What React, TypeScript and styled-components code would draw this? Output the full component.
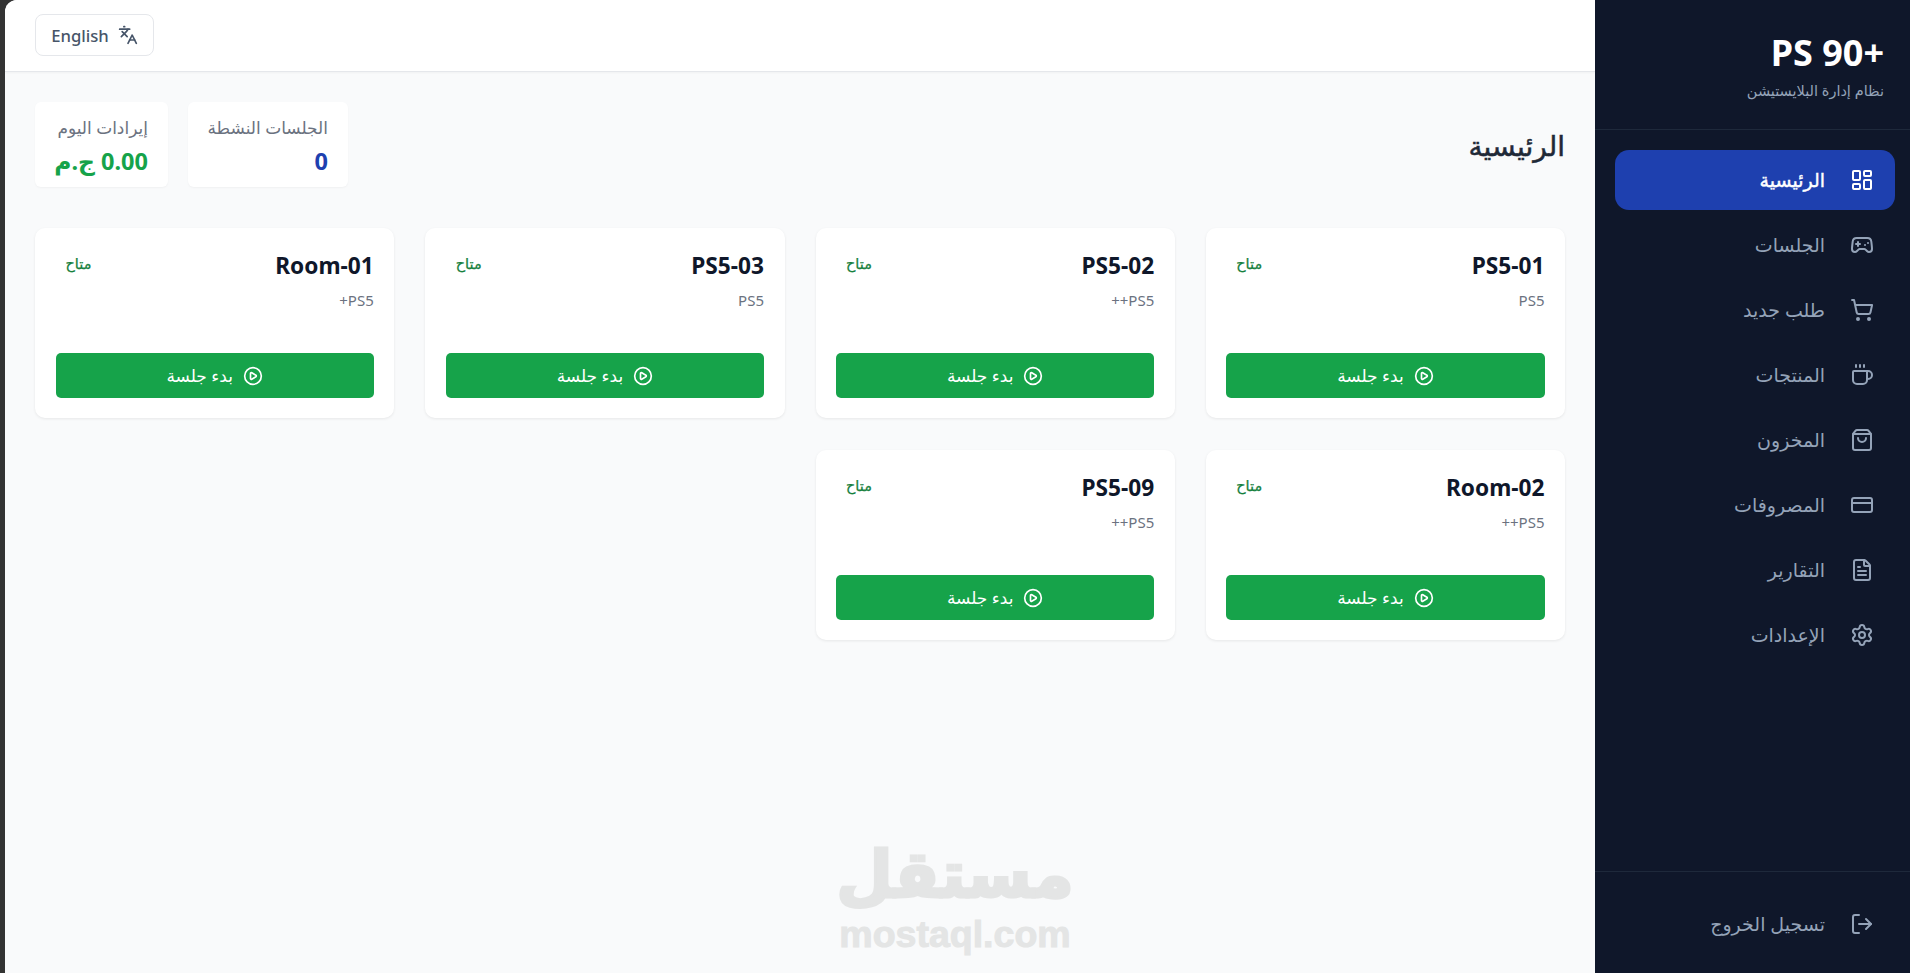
import * as React from 'react'
import styled, {createGlobalStyle} from 'styled-components'
import {
    LayoutDashboard, Gamepad2, ShoppingCart, Coffee, ShoppingBag,
    CreditCard, FileText, Settings, LogOut, Languages, CirclePlay
} from 'lucide-react'

const Global = createGlobalStyle`
  html, body { margin: 0; height: 100%; background: #333; }
  body { font-family: "Noto Sans", "Open Sans", "DejaVu Sans", sans-serif; }
  * { box-sizing: border-box; }
`

const Shell = styled.div`
  display: flex;
  height: 100vh;
  padding-left: 5px;
  overflow: hidden;
`
const Sidebar = styled.aside`
  width: 315px;
  flex: none;
  background: #0f172a;
  display: flex;
  flex-direction: column;
`
const Brand = styled.div`
  height: 130px;
  padding: 29px 26px 0;
  border-bottom: 1px solid #1e293b;
`
const BrandName = styled.div`
  color: #fff;
  font-size: 36px;
  font-weight: 700;
  line-height: 48px;
`
const BrandSub = styled.div`
  color: #94a3b8;
  font-size: 14.5px;
  line-height: 24px;
  margin-top: 1px;
`
const Nav = styled.nav`
  flex: 1;
  padding: 20px 15px 0 20px;
  display: flex;
  flex-direction: column;
  gap: 5px;
`
const NavItem = styled.a<{$active?: boolean}>`
  height: 60px;
  display: flex;
  align-items: center;
  gap: 25px;
  padding: 0 21px;
  border-radius: 14px;
  font-size: 19px;
  font-weight: 500;
  color: ${p => p.$active ? '#fff' : '#94a3b8'};
  background: ${p => p.$active ? '#1e40af' : 'transparent'};
  -webkit-text-stroke: ${p => p.$active ? '0.4px' : '0'};
`
const SideFoot = styled.div`
  height: 102px;
  border-top: 1px solid #1e293b;
  padding: 22px 15px 0 20px;
`
const Main = styled.main`
  flex: 1;
  min-width: 0;
  background: #f9fafb;
  border-top-left-radius: 12px;
  overflow: hidden;
  position: relative;
`
const TopBar = styled.header`
  height: 72px;
  background: #fff;
  border-bottom: 1px solid #e5e7eb;
  box-shadow: 0 1px 2px rgba(0, 0, 0, .04);
  display: flex;
  align-items: center;
  padding: 0 30px 2px;
`
const LangButton = styled.button`
  height: 42px;
  width: 119px;
  margin-right: auto;
  padding-top: 2px;
  display: flex;
  direction: ltr;
  align-items: center;
  justify-content: center;
  gap: 9px;
  border: 1px solid #e5e7eb;
  border-radius: 8px;
  background: #fff;
  color: #475569;
  font: 500 16.7px "Noto Sans", sans-serif;
`
const Content = styled.div`
  padding: 30px;
`
const PageHead = styled.div`
  display: flex;
  justify-content: space-between;
  align-items: center;
  margin-bottom: 41px;
`
const Title = styled.h1`
  margin: 0;
  color: #1f2937;
  font-size: 28px;
  font-weight: 500;
  -webkit-text-stroke: 0.5px #1f2937;
`
const Stats = styled.div`
  display: flex;
  gap: 20px;
`
const Stat = styled.div<{$width: number}>`
  width: ${p => p.$width}px;
  height: 85px;
  background: #fff;
  border-radius: 6px;
  padding: 12px 20px 12px 0;
  box-shadow: 0 1px 2px rgba(0, 0, 0, .04);
  white-space: nowrap;
`
const StatLabel = styled.div`
  color: #6b7280;
  font-size: 17px;
  line-height: 28px;
`
const StatValue = styled.div<{$color: string}>`
  color: ${p => p.$color};
  font-size: 23.5px;
  font-weight: 700;
  line-height: 30px;
  margin-top: 4px;
`
const Grid = styled.div`
  display: grid;
  grid-template-columns: repeat(4, 1fr);
  column-gap: 31px;
  row-gap: 32px;
`
const Card = styled.div`
  height: 190px;
  background: #fff;
  border-radius: 10px;
  padding: 20px 20.5px;
  box-shadow: 0 1px 3px rgba(0, 0, 0, .08);
  display: flex;
  flex-direction: column;
`
const CardHead = styled.div`
  display: flex;
  justify-content: space-between;
  align-items: flex-start;
`
const CardName = styled.div`
  direction: ltr;
  color: #0f172a;
  font-size: 22.7px;
  font-weight: 700;
  line-height: 36px;
`
const Badge = styled.span`
  color: #15803d;
  font-size: 14.5px;
  font-weight: 500;
  line-height: 22px;
  margin: 4px 10px 0 10px;
  -webkit-text-stroke: 0.25px #15803d;
`
const CardType = styled.div`
  color: #6b7280;
  font-size: 15px;
  line-height: 20px;
  margin-top: 6px;
`
const StartButton = styled.button`
  margin-top: auto;
  height: 45px;
  display: flex;
  align-items: center;
  justify-content: center;
  gap: 10px;
  border: 0;
  border-radius: 5px;
  background: #16a34a;
  color: #fff;
  font: 500 17px "Noto Sans", "DejaVu Sans", sans-serif;
`
const Watermark = styled.div`
  position: absolute;
  left: 800px;
  bottom: 18px;
  width: 300px;
  direction: ltr;
  text-align: center;
  color: #e4e5e5;
  pointer-events: none;
`
const WatermarkAr = styled.div`
  font: 700 65px/76px "DejaVu Sans", sans-serif;
  -webkit-text-stroke: 3px #e4e5e5;
`
const WatermarkEn = styled.div`
  font: 700 37.5px/42px "Liberation Sans", sans-serif;
  -webkit-text-stroke: 1px #e4e5e5;
`

const menu = [
    {label: 'الرئيسية', icon: LayoutDashboard, active: true},
    {label: 'الجلسات', icon: Gamepad2},
    {label: 'طلب جديد', icon: ShoppingCart},
    {label: 'المنتجات', icon: Coffee},
    {label: 'المخزون', icon: ShoppingBag},
    {label: 'المصروفات', icon: CreditCard},
    {label: 'التقارير', icon: FileText},
    {label: 'الإعدادات', icon: Settings},
]

const consoles = [
    {name: 'PS5-01', type: 'PS5'},
    {name: 'PS5-02', type: 'PS5++'},
    {name: 'PS5-03', type: 'PS5'},
    {name: 'Room-01', type: 'PS5+'},
    {name: 'Room-02', type: 'PS5++'},
    {name: 'PS5-09', type: 'PS5++'},
]

export default function App() {
    return (
        <>
            <Global/>
            <Shell dir='rtl'>
                <Sidebar>
                    <Brand>
                        <BrandName>+90 PS</BrandName>
                        <BrandSub>نظام إدارة البلايستيشن</BrandSub>
                    </Brand>
                    <Nav>
                        {menu.map(m => (
                            <NavItem key={m.label} $active={m.active}>
                                <m.icon size={24} strokeWidth={2}/>
                                {m.label}
                            </NavItem>
                        ))}
                    </Nav>
                    <SideFoot>
                        <NavItem>
                            <LogOut size={24}/>
                            تسجيل الخروج
                        </NavItem>
                    </SideFoot>
                </Sidebar>
                <Main>
                    <TopBar>
                        <LangButton>
                            English
                            <Languages size={20}/>
                        </LangButton>
                    </TopBar>
                    <Content>
                        <PageHead>
                            <Title>الرئيسية</Title>
                            <Stats>
                                <Stat $width={160}>
                                    <StatLabel>الجلسات النشطة</StatLabel>
                                    <StatValue $color='#1e40af'>0</StatValue>
                                </Stat>
                                <Stat $width={133}>
                                    <StatLabel>إيرادات اليوم</StatLabel>
                                    <StatValue $color='#16a34a'>0.00 ج.م</StatValue>
                                </Stat>
                            </Stats>
                        </PageHead>
                        <Grid>
                            {consoles.map(c => (
                                <Card key={c.name}>
                                    <CardHead>
                                        <CardName>{c.name}</CardName>
                                        <Badge>متاح</Badge>
                                    </CardHead>
                                    <CardType>{c.type}</CardType>
                                    <StartButton>
                                        <CirclePlay size={20}/>
                                        بدء جلسة
                                    </StartButton>
                                </Card>
                            ))}
                        </Grid>
                    </Content>
                    <Watermark>
                        <WatermarkAr>مستقل</WatermarkAr>
                        <WatermarkEn>mostaql.com</WatermarkEn>
                    </Watermark>
                </Main>
            </Shell>
        </>
    )
}
